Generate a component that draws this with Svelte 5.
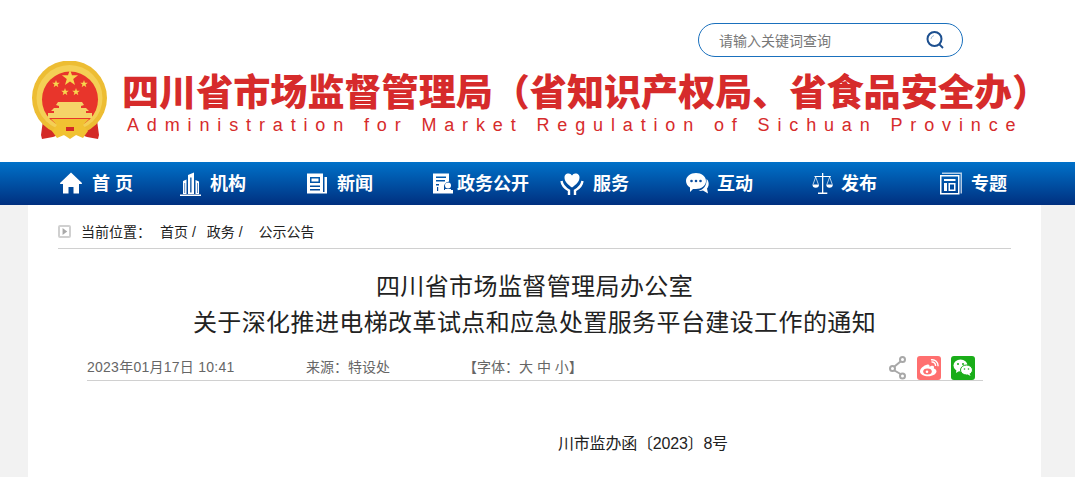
<script>
	const nav = [
		{ label: '首 页', icon: 'home', w: 120, gap: 8 },
		{ label: '机构', icon: 'org', w: 126, gap: 6 },
		{ label: '新闻', icon: 'news', w: 126, gap: 7 },
		{ label: '政务公开', icon: 'gov', w: 129, gap: 1 },
		{ label: '服务', icon: 'serve', w: 126, gap: 8 },
		{ label: '互动', icon: 'talk', w: 126, gap: 6 },
		{ label: '发布', icon: 'law', w: 127, gap: 4 },
		{ label: '专题', icon: 'topic', w: 126, gap: 7 }
	];

	// five point star, used for the emblem
	function star(cx, cy, r) {
		const pts = [];
		for (let i = 0; i < 10; i++) {
			const rad = i % 2 ? r * 0.4 : r;
			const a = -Math.PI / 2 + (i * Math.PI) / 5;
			pts.push(`${(cx + rad * Math.cos(a)).toFixed(2)},${(cy + rad * Math.sin(a)).toFixed(2)}`);
		}
		return pts.join(' ');
	}

	const stars = [
		[39, 17, 8.5],
		[25, 23, 4],
		[53, 23, 4],
		[34, 31, 4],
		[45, 31, 4]
	];
</script>

<div class="page">
	<header class="top">
		<div class="search">
			<span class="hint">请输入关键词查询</span>
			<svg class="lens" width="20" height="22" viewBox="0 0 20 22" fill="none">
				<circle cx="9.500" cy="10" r="7" stroke="#1c4f8f" stroke-width="2" />
				<path d="M14.500 15.500l3.500 3.500" stroke="#1c4f8f" stroke-width="1.800" />
				<path d="M6 10a4 4 0 0 1 3-3.500" stroke="#9db8d6" stroke-width="1" />
			</svg>
		</div>
		<div class="brand">
			<svg class="emblem" width="78" height="80" viewBox="0 0 78 80">
				<path d="M13 52 L10 74 L11 78 L22 76 L30 73 L48 73 L56 76 L67 78 L68 74 L65 52 Z" fill="#d42a26" />
				<circle cx="38.500" cy="37" r="37.500" fill="#edbd33" />
				<circle cx="38.500" cy="37" r="33" fill="#f4cf55" />
				<circle cx="39" cy="38.500" r="28" fill="#e8352b" />
				{#each stars as [x, y, r]}
					<polygon points={star(x, y, r)} fill="#f7d64e" />
				{/each}
				<path d="M27 41h24l2 3-3 1v2h5l3 3h-3v2h6v5H17v-5h6v-2h-3l3-3h5v-2l-3-1z" fill="#f5d468" />
				<path d="M20 58h38l-6 6 5 6-5 7-7-3-6 4-6-4-7 3-5-7 5-6z" fill="#f1c232" />
				<path d="M35 66h8v4h-8z" fill="#d42a26" />
			</svg>
			<div class="names">
				<div class="cn">四川省市场监督管理局（省知识产权局、省食品安全办）</div>
				<div class="en">Administration for Market Regulation of Sichuan Province</div>
			</div>
		</div>
	</header>

	<nav class="bar">
		{#each nav as item}
			<a class="item" style="width: {item.w}px; gap: {item.gap}px">
				<svg width="26" height="26" viewBox="0 0 26 26" fill="#fff">
					{#if item.icon === 'home'}
						<path d="M13 1.500 L24 12 Q24.500 13 23 13 L21 13 L21 22.500 L15.500 22.500 L15.500 16 L10.500 16 L10.500 22.500 L5 22.500 L5 13 L3 13 Q1.500 13 2 12 Z" />
					{:else if item.icon === 'org'}
						<path fill-rule="evenodd" d="M5 23V10l3.500-1.500V23zM10 23V4l6-2.500V23zM17.500 23V9l3.500 1.500V23zM2 23.500h21V25H2zM12 6.500v15h.8v-15zM14 6.500v15h-.5v-15zM6.500 12v10h.6V12zM19 12v10h.6V12z" />
					{:else if item.icon === 'news'}
						<path fill-rule="evenodd" d="M3 2.500h16v20H3zM6 6h10v6H6zM7.500 7.500h7v3h-7zM6 14.500h10V16H6zM6 18h10v1.500H6z" />
						<path d="M20.500 6H23v16.500h-4V21h1.500z" />
					{:else if item.icon === 'gov'}
						<path fill-rule="evenodd" d="M3 2.500h16v8a6 6 0 0 0-5 7.500v4.500H3zM6 5.500v1.500h10V5.500zM6 9v1.500h9V9zM6 13v1.500h3V13zM7 16v4h1.200v-4z" />
						<circle cx="18" cy="14.500" r="3" />
						<path d="M15 18h6v1h2v3.500h-9V19h1z" />
					{:else if item.icon === 'serve'}
						<path d="M13 16.500C9 13.500 5.500 11 5.500 6.500a4 4 0 0 1 7.500-2 4 4 0 0 1 7.500 2c0 4.500-3.500 7-7.500 10z" />
						<path d="M2.500 10c.5 4 3 7 7.500 9.500V24M23.500 10c-.5 4-3 7-7.500 9.500V24" fill="none" stroke="#fff" stroke-width="2.400" />
					{:else if item.icon === 'talk'}
						<path d="M11 2c5.500 0 10 3.500 10 8s-4.500 8-10 8l-3 0-3 3v-4.500C2.500 15 1 12.500 1 10c0-4.500 4.500-8 10-8z" />
						<path d="M21.500 8c2 1.500 2.500 4 2 6.500-.5 1.500-1 2.500-1.500 3l1 5-5-3c-2 .5-3.500 .5-4.500 0 5-.5 8.500-5 8-11.500z" />
						<circle cx="6.500" cy="10" r="1.300" fill="#0a4da0" />
						<circle cx="11" cy="10" r="1.300" fill="#0a4da0" />
						<circle cx="15.500" cy="10" r="1.300" fill="#0a4da0" />
					{:else if item.icon === 'law'}
						<path d="M11 2h1.300v19.500H11zM7 21.500h9.300V23H7zM3.500 5h16.300v1.100H3.500z" />
						<path d="M1.500 13.500h6.500a3.250 3.250 0 0 1-6.500 0zM15.300 13.500h6.500a3.250 3.250 0 0 1-6.500 0z" />
						<path d="M4.700 6 2 13.500M4.700 6l2.700 7.500M18.600 6l-2.700 7.500M18.600 6l2.700 7.500" stroke="#fff" stroke-width=".7" fill="none" />
					{:else}
						<path fill-rule="evenodd" d="M2 4h19.500v19.500H2zM3.500 5.500V22H20V5.500zM6 8h11.500v2H6zM6 12h3v8H6zM10.500 12h7v8h-7zM12 13.500V18.500h4v-5z" />
						<path d="M4 1.500h20v21h-1.500V3H4z" opacity=".7" />
					{/if}
				</svg>
				<span>{item.label}</span>
			</a>
		{/each}
	</nav>

	<main class="sheet">
		<div class="crumbs">
			<span class="arrow">
				<svg width="7" height="7" viewBox="0 0 9 9"><path d="M2 0 8 4.500 2 9z" fill="#a9a9a9" /></svg>
			</span>
			<span class="here">当前位置：</span>
			<span class="link">首页 /</span>
			<span class="link mid">政务 /</span>
			<span class="link">公示公告</span>
		</div>

		<h1>四川省市场监督管理局办公室<br />关于深化推进电梯改革试点和应急处置服务平台建设工作的通知</h1>

		<div class="meta">
			<span class="date">2023年01月17日 10:41</span>
			<span class="source">来源：特设处</span>
			<span class="size">【字体：大 中 小】</span>
			<div class="share">
				<svg width="18" height="24" viewBox="0 0 18 24" fill="none" stroke="#a8a8a8" stroke-width="2">
					<circle cx="13.500" cy="3.500" r="2.500" />
					<circle cx="3.500" cy="12.500" r="2.500" />
					<circle cx="13.500" cy="20" r="2.500" />
					<path d="M11.500 5.500 5.500 10.500M5.500 14.500 11.500 18" />
				</svg>
				<span class="tile weibo">
					<svg width="20" height="18" viewBox="0 0 20 18">
						<path d="M8.500 5.500c-4 1-7.500 4.200-7.500 7 0 3 4 4.800 8 4.800 5 0 8.500-2.600 8.500-5 0-1.800-1.800-2.500-2.700-2.800.5-1.500.2-2.700-1.300-2.800-1 0-2.200.5-3 1 .3-1.500-.3-2.700-2-2.200z" fill="#fff" />
						<ellipse cx="8.500" cy="12.500" rx="4.300" ry="3" fill="#ff6f6f" />
						<circle cx="8" cy="12.800" r="1.300" fill="#fff" />
						<path d="M12.500 3a3.500 3.500 0 0 1 4 4M12 .8a6 6 0 0 1 7 6.500" stroke="#fff" stroke-width="1.400" fill="none" />
					</svg>
				</span>
				<span class="tile wechat">
					<svg width="20" height="18" viewBox="0 0 20 18" fill="#fff">
						<ellipse cx="7.500" cy="6.500" rx="7" ry="6" />
						<path d="M3.500 10.500 3 14l4-2.500z" />
						<ellipse cx="13.500" cy="11" rx="6" ry="5" stroke="#1aad19" stroke-width="1" />
						<path d="M16.500 14.500l1 2.500-3.500-2z" />
						<circle cx="5" cy="5" r="1" fill="#1aad19" />
						<circle cx="10" cy="5" r="1" fill="#1aad19" />
						<circle cx="11.500" cy="10" r=".8" fill="#1aad19" />
						<circle cx="15.500" cy="10" r=".8" fill="#1aad19" />
					</svg>
				</span>
			</div>
		</div>

		<p class="docno">川市监办函〔2023〕8号</p>
	</main>
</div>

<style>
	:global(body) {
		margin: 0;
		background: #fff;
	}

	.page {
		width: 1075px;
		height: 477px;
		overflow: hidden;
		display: flex;
		flex-direction: column;
		font-family: 'Liberation Sans', 'Noto Sans CJK SC', sans-serif;
		color: #333;
		background: #f2f2f2;
	}

	.top {
		height: 162px;
		box-sizing: border-box;
		padding-top: 23px;
		display: flex;
		flex-direction: column;
		background: #fff;
	}

	.search {
		box-sizing: border-box;
		width: 265px;
		height: 34px;
		margin-left: 698px;
		padding: 0 17px 0 20px;
		border: 1px solid #1a70bd;
		border-radius: 17px;
		display: flex;
		align-items: center;
		justify-content: space-between;
	}

	.hint {
		font-size: 14px;
		color: #777;
	}

	.brand {
		display: flex;
		align-items: flex-start;
		margin: 4px 0 0 31px;
	}

	.emblem {
		flex: none;
	}

	.names {
		margin: 11px 0 0 13px;
	}

	.cn {
		font-size: 37.100px;
		line-height: 43px;
		font-weight: 900;
		color: #d62b2b;
		white-space: nowrap;
	}

	.en {
		font-size: 18px;
		line-height: 20px;
		letter-spacing: 7.860px;
		color: #d62b2b;
		white-space: nowrap;
		margin-left: 5px;
	}

	.bar {
		height: 43px;
		flex: none;
		box-sizing: border-box;
		padding-left: 58px;
		display: flex;
		align-items: center;
		background: linear-gradient(#0071c9, #00307f);
	}

	.item {
		flex: none;
		display: flex;
		align-items: center;
		color: #fff;
		font-size: 18px;
		font-weight: 700;
		white-space: nowrap;
	}

	.item span {
		padding-bottom: 3px;
	}

	.sheet {
		flex: 1;
		width: 1013px;
		margin-left: 28px;
		box-sizing: border-box;
		background: #fff;
	}

	.crumbs {
		box-sizing: border-box;
		height: 44px;
		margin: 0 30px;
		display: flex;
		align-items: center;
		border-bottom: 1px solid #d0d0d0;
		font-size: 14px;
		color: #222;
		padding-top: 9px;
	}

	.arrow {
		box-sizing: border-box;
		width: 13px;
		height: 13px;
		border: 2px solid #d0d0d0;
		border-radius: 2px;
		display: flex;
		align-items: center;
		justify-content: center;
		margin-right: 10px;
	}

	.here {
		margin-right: 9px;
	}

	.link {
		margin-right: 11px;
	}

	.mid {
		margin-right: 16px;
	}

	h1 {
		margin: 20px 0 0;
		font-family: 'Liberation Serif', 'Noto Sans CJK SC', serif;
		font-size: 24px;
		line-height: 36px;
		letter-spacing: 0.400px;
		font-weight: 400;
		text-align: center;
		color: #222;
	}

	.meta {
		box-sizing: border-box;
		height: 36px;
		margin: 4px 58px 0 59px;
		padding-top: 7px;
		display: flex;
		align-items: center;
		border-bottom: 1px solid #d0d0d0;
		font-size: 14px;
		color: #666;
	}

	.date {
		width: 219px;
		letter-spacing: 0.250px;
	}

	.source {
		width: 157px;
	}

	.share {
		margin: 3px 8px 0 auto;
		display: flex;
		align-items: center;
		gap: 10px;
	}

	.tile {
		width: 24px;
		height: 24px;
		border-radius: 3px;
		display: flex;
		align-items: center;
		justify-content: center;
	}

	.weibo {
		background: #ff6f6f;
	}

	.wechat {
		background: #1aad19;
	}

	.docno {
		margin: 51px 0 0 530px;
		font-size: 16px;
		line-height: 24px;
		letter-spacing: -0.200px;
		color: #222;
	}
</style>
